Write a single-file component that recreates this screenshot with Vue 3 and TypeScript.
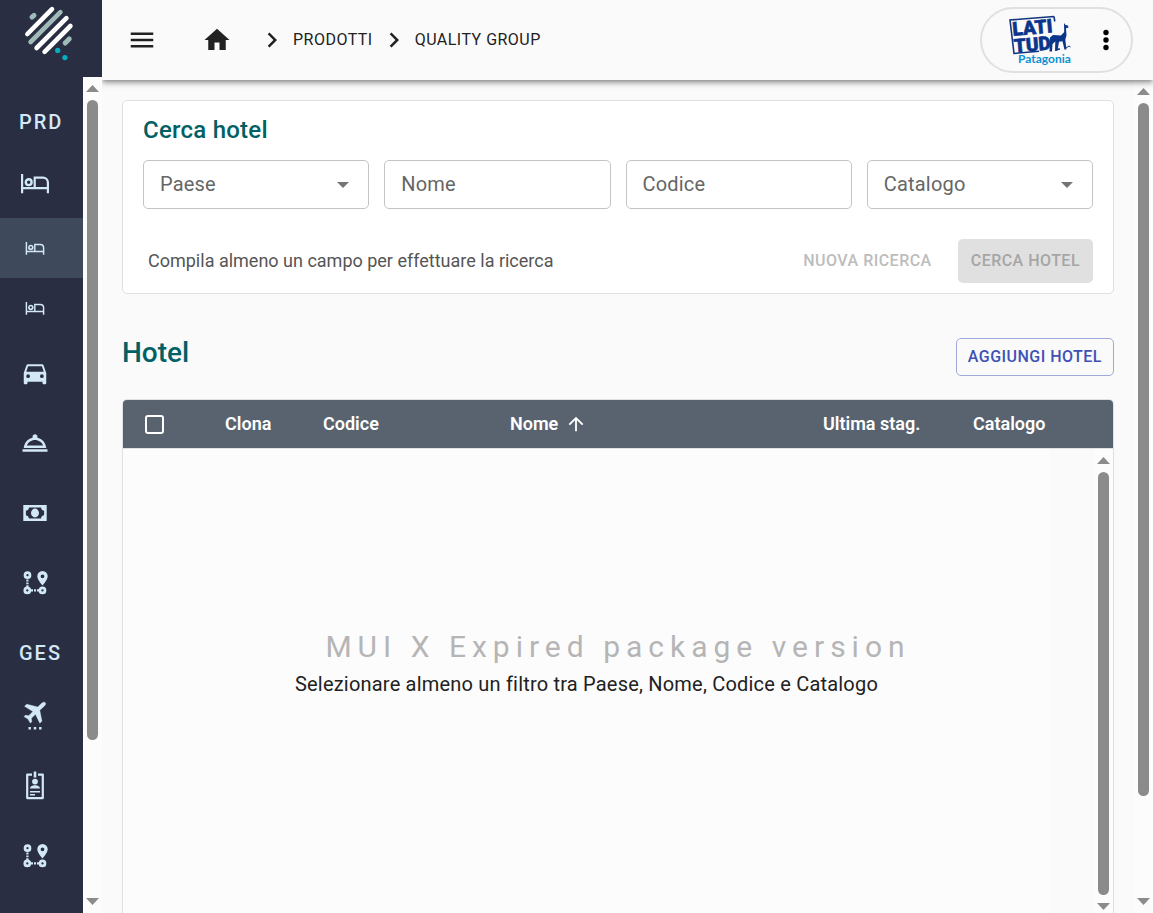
<script setup lang="ts">
import { ref, computed } from 'vue'

type NavEntry = {
  kind: 'heading' | 'item' | 'sub'
  label: string
  icon?: string
  active?: boolean
}

type Field = { id: string; label: string; kind: 'select' | 'text'; options?: string[] }

const navEntries: NavEntry[] = [
  { kind: 'heading', label: 'PRD' },
  { kind: 'item', label: 'Hotel', icon: 'bed' },
  { kind: 'sub', label: 'Ricerca hotel', icon: 'bed', active: true },
  { kind: 'sub', label: 'Camere', icon: 'bed' },
  { kind: 'item', label: 'Auto', icon: 'car' },
  { kind: 'item', label: 'Servizi', icon: 'bell' },
  { kind: 'item', label: 'Tariffe', icon: 'money' },
  { kind: 'item', label: 'Itinerari', icon: 'route' },
  { kind: 'heading', label: 'GES' },
  { kind: 'item', label: 'Voli', icon: 'plane' },
  { kind: 'item', label: 'Pratiche', icon: 'badge' },
  { kind: 'item', label: 'Percorsi', icon: 'route' },
]

const crumbs = ['PRODOTTI', 'QUALITY GROUP']

const fields: Field[] = [
  { id: 'paese', label: 'Paese', kind: 'select', options: ['Argentina', 'Cile'] },
  { id: 'nome', label: 'Nome', kind: 'text' },
  { id: 'codice', label: 'Codice', kind: 'text' },
  { id: 'catalogo', label: 'Catalogo', kind: 'select', options: ['Patagonia'] },
]

const values = ref<Record<string, string>>({ paese: '', nome: '', codice: '', catalogo: '' })
const isEmpty = computed(() => Object.values(values.value).every((v) => !v))

function reset() {
  values.value = { paese: '', nome: '', codice: '', catalogo: '' }
}
</script>

<template>
  <div class="app">
    <aside class="sidebar">
      <a class="brand" href="#" aria-label="Home">
        <svg width="102" height="77" viewBox="0 0 102 77" fill="none" stroke-linecap="round" stroke-width="4.6">
          <g stroke="#9fbbb9">
            <path d="M32 17.2 34 15.4" stroke-width="5" />
            <path d="M30.6 42 60.4 12.2" />
            <path d="M65.2 43 69.2 39" stroke-width="5" />
          </g>
          <g stroke="#ffffff">
            <path d="M27.4 34 52 9.2" />
            <path d="M36.6 48 66.4 18.2" />
            <path d="M44.6 51.8 70.4 26" />
          </g>
          <g fill="#06aec2">
            <circle cx="57.7" cy="50.4" r="2.6" />
            <circle cx="64.9" cy="57.6" r="2.6" />
          </g>
        </svg>
      </a>
      <div class="nav-wrap">
        <nav class="nav">
          <template v-for="(entry, i) in navEntries" :key="i">
            <h2 v-if="entry.kind === 'heading'" class="nav-heading">{{ entry.label }}</h2>
            <a
              v-else
              href="#"
              class="nav-item"
              :class="{ sub: entry.kind === 'sub', active: entry.active }"
              :aria-label="entry.label"
            >
              <svg v-if="entry.icon === 'bed'" viewBox="0 0 30 30" fill="none" stroke="currentColor" stroke-width="2.2">
                <path d="M2.1 6v19.2M2.1 20.1h25.800M27.900 25.200V14.600a5 5 0 0 0-5-5H14.700v10.500" />
                <circle cx="8.7" cy="14.2" r="2.9" stroke-width="2.4" />
              </svg>
              <svg v-else-if="entry.icon === 'car'" viewBox="0 0 24 24" fill="currentColor" fill-rule="evenodd">
                <path d="M18.920 6.010C18.720 5.420 18.160 5 17.500 5h-11c-.66 0-1.210.42-1.420 1.010L3 12v8c0 .55.45 1 1 1h1c.55 0 1-.45 1-1v-1h12v1c0 .55.45 1 1 1h1c.55 0 1-.45 1-1v-8zM6.500 16a1.500 1.500 0 1 1 0-3 1.500 1.500 0 0 1 0 3zm11 0a1.500 1.500 0 1 1 0-3 1.500 1.500 0 0 1 0 3zM5 11l1.500-4.500h11L19 11z" />
              </svg>
              <svg v-else-if="entry.icon === 'bell'" viewBox="0 0 24 24" fill="currentColor" fill-rule="evenodd">
                <path d="M2 17h20v2H2zM13.840 7.790c.1-.24.16-.51.16-.79 0-1.100-.9-2-2-2s-2 .9-2 2c0 .28.06.55.16.79C6.250 8.600 3.270 11.930 3 16h18c-.27-4.070-3.250-7.400-7.160-8.210zM12 9.580c2.950 0 5.470 1.830 6.500 4.410h-13c1.030-2.580 3.550-4.410 6.500-4.410z" />
              </svg>
              <svg v-else-if="entry.icon === 'money'" viewBox="0 0 30 30" fill="currentColor" fill-rule="evenodd">
                <path d="M3.300 7h23.400v16H3.300zM9 9.600a3.600 3.600 0 0 1-3.100 3.200v4.400A3.600 3.600 0 0 1 9 20.400h12a3.600 3.600 0 0 1 3.100-3.200v-4.400A3.600 3.600 0 0 1 21 9.600z" />
                <ellipse cx="15" cy="15" rx="4" ry="4.400" />
              </svg>
              <svg v-else-if="entry.icon === 'route'" viewBox="0 0 30 30" fill="currentColor" fill-rule="evenodd">
                <g fill="none" stroke="currentColor" stroke-width="2.700">
                  <circle cx="7.500" cy="7.200" r="2.500" />
                  <circle cx="7.300" cy="22.400" r="2.500" />
                  <circle cx="22.500" cy="22.400" r="2.500" />
                </g>
                <path d="M6.300 11.500h2.200v1.900H6.300zM6.300 14.400h2.200v1.900H6.300zM6.300 17.300h2.200v1.700H6.300zM11 21.300h2v2.200h-2zM14 21.300h2v2.200h-2zM17 21.300h2v2.200h-2z" />
                <path d="M22.500 3a5.200 5.200 0 0 0-5.200 5.200c0 3.800 5.200 9.200 5.200 9.200s5.200-5.400 5.200-9.200A5.200 5.200 0 0 0 22.500 3zm0 3.400a1.900 1.900 0 1 1 0 3.800 1.900 1.900 0 0 1 0-3.800z" />
              </svg>
              <svg v-else-if="entry.icon === 'plane'" viewBox="0 0 30 30" fill="currentColor">
                <path d="M25.300 1.700c-.8-.8-2.300-.7-3.300.3l-4.300 4L6.700 3.300 4.600 5.200l8.300 5.300-4.100 4.300-3.400-.6-1.300 1.400 3.900 2.400 2.300 4 1.500-1.300-.5-3.400 4.200-4.100 4.400 9 2-2.100-2.200-10.800 4.700-4.400c1.200-1.100 1.500-2.500.9-3.200z" stroke="currentColor" stroke-width="0.500" />
                <path d="M8.500 26h2.400v2.400H8.500zM13.800 26h2.400v2.400h-2.400zM19.100 26h2.400v2.400h-2.400z" />
              </svg>
              <svg v-else-if="entry.icon === 'badge'" viewBox="0 0 30 30" fill="currentColor">
                <path d="M12 3.700H7.200v23.400h15.600V3.700H18" fill="none" stroke="currentColor" stroke-width="2.200" stroke-linejoin="round" />
                <path d="M13.700.5h2.600v6h-2.600z" />
                <circle cx="15" cy="10.600" r="2.900" />
                <path d="M10 17.600c0-2.200 2.500-3.400 5-3.400s5 1.200 5 3.400zM10 20h10v1.400H10zM10 23h5v1.400h-5z" />
              </svg>
            </a>
          </template>
        </nav>
        <div class="scrollbar" aria-hidden="true">
          <svg class="arrow" viewBox="0 0 13 7"><path d="M0 7 6.500 0 13 7z" /></svg>
          <div class="track"><div class="thumb thumb-nav"></div></div>
          <svg class="arrow" viewBox="0 0 13 7"><path d="M0 0h13L6.500 7z" /></svg>
        </div>
      </div>
    </aside>

    <header class="topbar">
      <button class="icon-button" type="button" aria-label="Menu">
        <svg width="30" height="30" viewBox="0 0 24 24"><path d="M3 18h18v-2H3v2zm0-5h18v-2H3v2zm0-7v2h18V6H3z" /></svg>
      </button>
      <nav class="crumbs">
        <a class="home" href="#" aria-label="Home">
          <svg width="30" height="30" viewBox="0 0 24 24"><path d="M10 20v-6h4v6h5v-8h3L12 3 2 12h3v8z" /></svg>
        </a>
        <template v-for="crumb in crumbs" :key="crumb">
          <svg class="chevron" width="30" height="30" viewBox="0 0 24 24"><path d="M10 6 8.590 7.410 13.170 12l-4.580 4.590L10 18l6-6z" /></svg>
          <a href="#">{{ crumb }}</a>
        </template>
      </nav>
      <div class="account">
        <svg width="66" height="52" viewBox="0 0 66 52" role="img" aria-label="Latitud Patagonia">
          <path d="M46 2.500 2 6l4 33.500L31 37.200M46 2.500l.8 5M48.500 35.400l3.500-.4" fill="none" stroke="#12367f" stroke-width="1.600" />
          <g class="stamp" fill="#0b348b" stroke="#0b348b" stroke-width="0.600" transform="rotate(-5 26 20)">
            <text x="5" y="20">LATI</text>
            <text x="5" y="37">TUD</text>
          </g>
          <path d="M56 9l1.500 2 2.500.5.5 2-2.500.8.5 7-1.200 4.500 1.200 9.500-2 .4-2-8.500-3.500.5-1.500 9-2.500.2.300-9.500-2.800 2.500-.5 7.500-2.500.2.500-14 3-2.600 8 .500 3.200-3.500z" fill="#0b348b" />
          <path d="M58 34l3-2 1.500 1" fill="none" stroke="#0b348b" stroke-width="1" />
          <text class="region" x="10" y="49" fill="#0a92d2">Patagonia</text>
        </svg>
        <button class="more" type="button" aria-label="Altre opzioni">
          <svg width="30" height="30" viewBox="0 0 30 30"><circle cx="15" cy="7.500" r="2.700" /><circle cx="15" cy="15" r="2.700" /><circle cx="15" cy="22.500" r="2.700" /></svg>
        </button>
      </div>
    </header>

    <div class="page">
      <main class="content">
        <form class="search-card" @submit.prevent>
          <h2 class="card-title">Cerca hotel</h2>
          <div class="fields">
            <div v-for="field in fields" :key="field.id" class="field">
              <label v-show="!values[field.id]" :for="field.id">{{ field.label }}</label>
              <template v-if="field.kind === 'select'">
                <select :id="field.id" v-model="values[field.id]">
                  <option value=""></option>
                  <option v-for="option in field.options" :key="option">{{ option }}</option>
                </select>
                <svg class="caret" width="12" height="6" viewBox="0 0 12 6"><path d="M0 0h12L6 6z" /></svg>
              </template>
              <input v-else :id="field.id" v-model="values[field.id]" type="text" autocomplete="off" />
            </div>
          </div>
          <div class="actions">
            <p>Compila almeno un campo per effettuare la ricerca</p>
            <button class="btn flat" type="button" :disabled="isEmpty" @click="reset">NUOVA RICERCA</button>
            <button class="btn filled" type="submit" :disabled="isEmpty">CERCA HOTEL</button>
          </div>
        </form>

        <div class="section-head">
          <h1>Hotel</h1>
          <button class="btn outlined" type="button">AGGIUNGI HOTEL</button>
        </div>

        <section class="grid">
          <table>
            <colgroup>
              <col class="c-check" /><col class="c-clone" /><col class="c-code" /><col />
              <col class="c-season" /><col class="c-catalog" /><col class="c-pin" />
            </colgroup>
            <thead>
              <tr>
                <th class="check"><input type="checkbox" aria-label="Seleziona tutte le righe" /></th>
                <th>Clona</th>
                <th>Codice</th>
                <th aria-sort="ascending">
                  <span class="sorted">Nome
                    <svg width="22" height="22" viewBox="0 0 24 24"><path d="m4 12 1.410 1.410L11 7.830V20h2V7.830l5.580 5.590L20 12l-8-8z" /></svg>
                  </span>
                </th>
                <th>Ultima stag.</th>
                <th>Catalogo</th>
                <td></td>
              </tr>
            </thead>
          </table>
          <div class="grid-body">
            <p class="empty">Selezionare almeno un filtro tra Paese, Nome, Codice e Catalogo</p>
            <div class="pinned"></div>
            <div class="scrollbar" aria-hidden="true">
              <svg class="arrow" viewBox="0 0 13 7"><path d="M0 7 6.500 0 13 7z" /></svg>
              <div class="track"><div class="thumb thumb-grid"></div></div>
              <svg class="arrow" viewBox="0 0 13 7"><path d="M0 0h13L6.500 7z" /></svg>
            </div>
            <div class="watermark">MUI X Expired package version</div>
          </div>
        </section>
      </main>
      <div class="scrollbar" aria-hidden="true">
        <svg class="arrow" viewBox="0 0 13 7"><path d="M0 7 6.500 0 13 7z" /></svg>
        <div class="track"><div class="thumb thumb-page"></div></div>
        <svg class="arrow" viewBox="0 0 13 7"><path d="M0 0h13L6.500 7z" /></svg>
      </div>
    </div>
  </div>
</template>

<style>
body {
  background: #fafafa;
}
</style>

<style scoped>
.app {
  display: grid;
  grid-template-columns: 102px minmax(0, 1fr);
  grid-template-rows: 80px minmax(0, 1fr);
  height: 100vh;
  overflow: hidden;
  font-family: Roboto, "Liberation Sans", sans-serif;
  color: #212121;
}
.app * {
  box-sizing: border-box;
}
h1,
h2,
p {
  margin: 0;
}
a {
  color: inherit;
  text-decoration: none;
}
button {
  font: inherit;
  cursor: pointer;
}

/* Sidebar */
.sidebar {
  grid-row: 1 / 3;
  display: flex;
  flex-direction: column;
  min-height: 0;
  background: #292e42;
}
.brand {
  display: block;
  flex: none;
  height: 77px;
}
.nav-wrap {
  flex: 1;
  display: flex;
  min-height: 0;
}
.nav {
  flex: 1;
  padding-top: 10px;
  overflow: hidden;
}
.nav-heading {
  height: 61px;
  padding: 5px 0 0 19px;
  font-size: 20px;
  line-height: 60px;
  font-weight: 500;
  letter-spacing: 2px;
  color: #d3e8f6;
}
.nav-heading:not(:first-child) {
  margin-bottom: 2px;
}
.nav-item {
  display: flex;
  align-items: center;
  height: 70px;
  padding-left: 20px;
  color: #d3e8f6;
}
.nav-item svg {
  width: 30px;
  height: 30px;
}
.nav-item.sub {
  height: 60px;
  padding-left: 25px;
}
.nav-item.sub svg {
  width: 20px;
  height: 20px;
}
.nav-item.active {
  background: #3e495c;
}

/* Scrollbars */
.scrollbar {
  flex: none;
  width: 19px;
  display: flex;
  flex-direction: column;
  align-items: center;
  background: #fcfcfc;
}
.arrow {
  flex: none;
  width: 13px;
  height: 7px;
  margin: 8px 0;
  fill: #8b8b8b;
}
.track {
  flex: 1;
  width: 11px;
}
.thumb {
  border-radius: 6px;
  background: #8b8b8b;
}
.thumb-nav {
  height: 81%;
}
.thumb-page {
  height: 88%;
}
.thumb-grid {
  height: 100%;
}

/* Top bar */
.topbar {
  position: relative;
  z-index: 1;
  display: flex;
  align-items: center;
  padding: 0 20px 0 25px;
  background: #fafafa;
  box-shadow: 0 2px 4px -1px rgba(0, 0, 0, 0.3), 0 4px 5px rgba(0, 0, 0, 0.16), 0 1px 10px rgba(0, 0, 0, 0.14);
  clip-path: inset(0 0 -20px 0);
}
.icon-button,
.more {
  display: flex;
  padding: 0;
  border: 0;
  background: none;
}
.topbar svg {
  fill: #212121;
}
.crumbs {
  display: flex;
  align-items: center;
  margin-left: 45px;
  font-size: 16px;
  line-height: 24px;
  letter-spacing: 0.03em;
}
.home {
  display: flex;
  margin-right: 25px;
}
.chevron {
  margin: 0 6px;
}
.chevron:first-of-type {
  margin-left: 0;
}
.account {
  display: flex;
  align-items: center;
  margin-left: auto;
  height: 66px;
  padding: 0 10px 0 26px;
  gap: 17px;
  border: 2px solid #e0e0e0;
  border-radius: 33px;
}
.more svg {
  fill: #000;
}
.stamp {
  font-size: 19px;
  font-weight: 900;
}
.region {
  font-family: Lato, sans-serif;
  font-size: 12px;
  font-weight: 700;
}

/* Page */
.page {
  display: flex;
  min-height: 0;
}
.content {
  flex: 1;
  min-width: 0;
  padding: 20px;
  overflow: hidden;
}
.search-card {
  padding: 13px 20px 10px;
  border: 1px solid #e0e0e0;
  border-radius: 5px;
  background: #fff;
}
.card-title {
  margin-bottom: 14px;
  font-size: 24px;
  line-height: 32px;
  font-weight: 500;
  letter-spacing: 0.01em;
  color: #006064;
}
.fields {
  display: grid;
  grid-template-columns: repeat(4, minmax(0, 1fr));
  gap: 15px;
}
.field {
  position: relative;
  height: 49px;
}
.field label {
  position: absolute;
  left: 17px;
  top: 0;
  font-size: 20px;
  line-height: 48px;
  letter-spacing: 0.01em;
  color: #666;
  pointer-events: none;
}
.field input,
.field select {
  width: 100%;
  height: 100%;
  padding: 0 17px;
  border: 1px solid #c4c4c4;
  border-radius: 5px;
  background: transparent;
  font: inherit;
  font-size: 20px;
  color: inherit;
  appearance: none;
}
.caret {
  position: absolute;
  right: 20px;
  top: 22px;
  fill: #757575;
  pointer-events: none;
}
.actions {
  display: flex;
  align-items: center;
  gap: 13px;
  margin-top: 30px;
}
.actions p {
  flex: 1;
  padding-left: 5px;
  font-size: 18px;
  line-height: 24px;
  color: #555;
}
.btn {
  padding: 0 12px 2px;
  border: 1px solid transparent;
  border-radius: 5px;
  font-size: 16px;
  font-weight: 500;
  letter-spacing: 0.03em;
  white-space: nowrap;
}
.btn.flat,
.btn.filled {
  height: 44px;
}
.btn.flat {
  background: none;
  color: #bdbdbd;
}
.btn.filled {
  background: #e0e0e0;
  color: #a6a6a6;
}
.btn.outlined {
  height: 38px;
  padding: 0 11px 2px;
  background: none;
  border-color: #9fa8da;
  color: #3f51b5;
}
.section-head {
  display: flex;
  align-items: flex-start;
  justify-content: space-between;
  margin: 44px 0 23px;
}
.section-head h1 {
  font-size: 28px;
  line-height: 30px;
  font-weight: 500;
  color: #006064;
}

/* Grid */
.grid {
  border: 1px solid #e0e0e0;
  border-radius: 5px;
  overflow: hidden;
  background: #fcfcfc;
}
table {
  width: 100%;
  table-layout: fixed;
  border-collapse: collapse;
  background: #58636f;
  color: #fff;
}
th,
td {
  height: 48px;
  padding: 0 0 0 12px;
  font-size: 18px;
  line-height: 24px;
  font-weight: 600;
  text-align: left;
  white-space: nowrap;
}
.c-check {
  width: 90px;
}
.c-clone {
  width: 98px;
}
.c-code {
  width: 187px;
}
.c-season {
  width: 150px;
}
.c-catalog {
  width: 89px;
}
.c-pin {
  width: 63px;
}
.check {
  padding-left: 22px;
}
.check input {
  display: block;
  width: 19px;
  height: 19px;
  margin: 0;
  border: 2px solid #fff;
  border-radius: 3px;
  appearance: none;
}
.sorted {
  display: flex;
  align-items: center;
  gap: 7px;
}
.sorted svg {
  fill: #fff;
}
.grid-body {
  position: relative;
  display: flex;
  height: 470px;
  border-top: 1px solid #e0e0e0;
}
.empty {
  flex: 1;
  align-self: center;
  padding-top: 1px;
  font-size: 20px;
  line-height: 28px;
  letter-spacing: 0.01em;
  text-align: center;
}
.pinned {
  width: 44px;
  background: #fafafa;
}
.watermark {
  position: absolute;
  left: 0;
  right: 0;
  top: 0;
  font-size: 30px;
  line-height: 396px;
  letter-spacing: 6px;
  text-align: center;
  white-space: nowrap;
  color: #b5b5b5;
  pointer-events: none;
}
</style>
